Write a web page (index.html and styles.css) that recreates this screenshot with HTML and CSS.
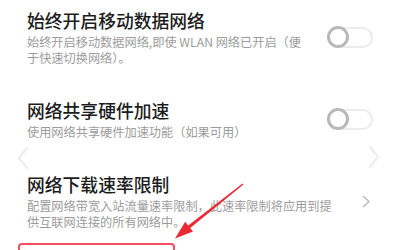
FILE: index.html
```html
<!DOCTYPE html>
<html>
<head>
<meta charset="utf-8">
<link rel="stylesheet" href="styles.css">
</head>
<body>
<div class="screen">
  <div class="list">
    <div class="row">
      <div class="text">
        <div class="title">始终开启移动数据网络</div>
        <div class="desc">始终开启移动数据网络,即使 WLAN 网络已开启（便于快速切换网络）。</div>
      </div>
      <div class="switch"><span class="knob"></span></div>
    </div>
    <div class="row">
      <div class="text">
        <div class="title">网络共享硬件加速</div>
        <div class="desc">使用网络共享硬件加速功能（如果可用）</div>
      </div>
      <div class="switch"><span class="knob"></span></div>
    </div>
    <div class="row">
      <div class="text wide">
        <div class="title">网络下载速率限制</div>
        <div class="desc">配置网络带宽入站流量速率限制，此速率限制将应用到提供互联网连接的所有网络中。</div>
      </div>
      <svg class="chev" width="9" height="13" viewBox="0 0 9 13"><path d="M1.5 1.5 L7 6.5 L1.5 11.5" fill="none" stroke="#bdbdbd" stroke-width="1.6" stroke-linecap="round" stroke-linejoin="round"/></svg>
    </div>
  </div>

  <svg class="ghost ghost-left" width="14" height="24" viewBox="0 0 14 24"><path d="M11 2 L3 12 L11 22" fill="none" stroke="#eeeeee" stroke-width="2.5" stroke-linecap="round"/></svg>
  <svg class="ghost ghost-right" width="14" height="24" viewBox="0 0 14 24"><path d="M3 2 L11 12 L3 22" fill="none" stroke="#eeeeee" stroke-width="2.5" stroke-linecap="round"/></svg>

  <div class="mark-box"></div>
  <svg class="arrow" width="400" height="250" viewBox="0 0 400 250">
    <polygon points="175,238.5 193,231.5 190.2,228 243.4,184.4 242.6,183.6 188.2,225.4 185.2,221.8" fill="#ea2a33"/>
  </svg>
</div>
</body>
</html>
```

FILE: styles.css
```css
* { box-sizing: border-box; }
html, body { margin: 0; padding: 0; background: #ffffff; }
.screen {
  position: relative;
  width: 400px;
  height: 250px;
  overflow: hidden;
  font-family: "Noto Sans CJK SC", "Noto Sans", sans-serif;
}
.list {
  display: flex;
  flex-direction: column;
  gap: 32px;
  padding: 8px 0 0 0;
}
.row {
  display: flex;
  align-items: center;
  padding: 0 27px 0 27px;
}
.text { flex: 1; min-width: 0; margin-right: 20px; }
.text.wide { margin-right: 25px; }
.title {
  font-size: 17.8px;
  line-height: 24px;
  color: #1c1c1c;
  font-weight: 500;
}
.desc {
  margin-top: 2px;
  font-size: 12.2px;
  line-height: 16px;
  color: #9c9c9c;
}
.switch {
  width: 46px;
  height: 21px;
  border: 2px solid #ececec;
  border-radius: 11px;
  display: flex;
  align-items: center;
  flex-shrink: 0;
}
.knob {
  width: 22px;
  height: 22px;
  margin-left: -2px;
  border: 3.5px solid #b9b9b9;
  border-radius: 50%;
  background: #fff;
}
.chev { flex-shrink: 0; margin-right: 2px; }
.ghost { position: absolute; }
.ghost-left { left: 16px; top: 146px; }
.ghost-right { left: 367px; top: 145px; }
.mark-box {
  position: absolute;
  left: 18px;
  top: 243px;
  width: 157px;
  height: 30px;
  border: 2.5px solid #f5505f;
  border-radius: 4px;
}
.arrow { position: absolute; left: 0; top: 0; }
```
